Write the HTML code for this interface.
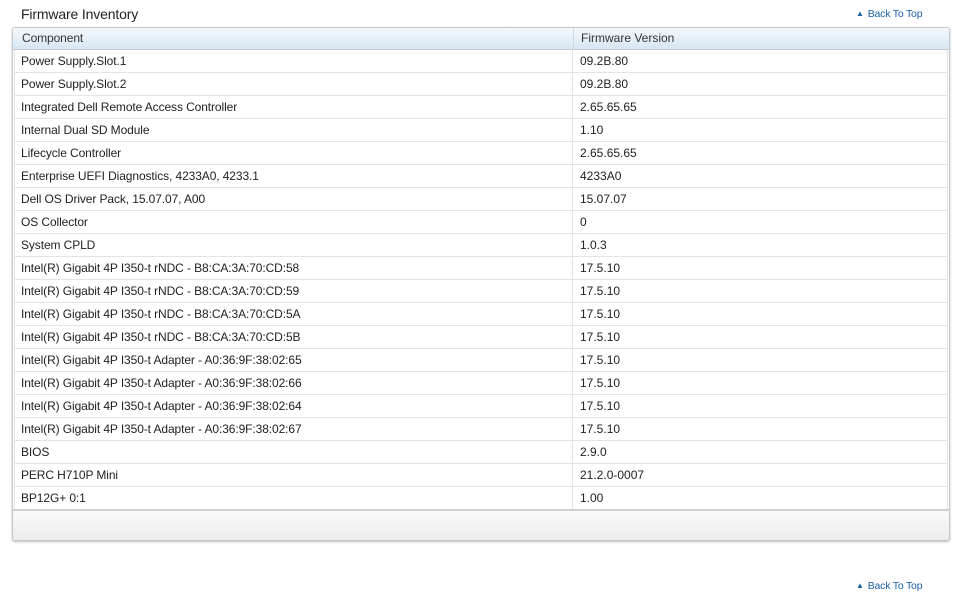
<!DOCTYPE html>
<html><head><style>
body{margin:0;background:#fff;font-family:"Liberation Sans",Arial,sans-serif;width:960px;height:608px;position:relative;overflow:hidden}
.title{position:absolute;left:21px;top:6px;font-size:14px;color:#222;letter-spacing:-0.15px}
.btt{position:absolute;left:856px;font-size:10.5px;color:#1a5fa6;letter-spacing:-0.2px}
.btt span{font-size:8px;margin-right:4px;position:relative;top:-1px}
.box{position:absolute;left:12px;top:27px;width:936px;height:512px;border:1px solid #c4c8cc;border-radius:3px;box-shadow:0 1px 2px rgba(0,0,0,.25);background:#fff;overflow:hidden}
.hdr{height:21px;background:linear-gradient(#f4f8fc,#d8e6f2);border-bottom:1px solid #c0ccd8;display:flex;font-size:12px;color:#333;line-height:21px}
.row{height:22px;border-bottom:1px solid #e4e4e4;display:flex;font-size:12px;color:#222;line-height:22px;margin:0 1px;border-left:1px solid #e4e4e4;border-right:1px solid #e4e4e4}
.c1{width:551px;padding-left:6px;border-right:1px solid #e4e4e4;letter-spacing:-0.1px}
.c2{padding-left:7px}
.hdr .c1{width:551px;padding-left:9px;border-right:1px solid #d0d8e0}
.foot{position:absolute;left:0;right:0;bottom:0;height:29px;border-top:2px solid #d0d0d0;background:linear-gradient(#fafafa,#ececec)}
</style></head><body>
<div class="title">Firmware Inventory</div>
<div class="btt" style="top:8px"><span>▲</span>Back To Top</div>
<div class="box">
<div class="hdr"><div class="c1">Component</div><div class="c2">Firmware Version</div></div>
<div class="row"><div class="c1">Power Supply.Slot.1</div><div class="c2">09.2B.80</div></div>
<div class="row"><div class="c1">Power Supply.Slot.2</div><div class="c2">09.2B.80</div></div>
<div class="row"><div class="c1">Integrated Dell Remote Access Controller</div><div class="c2">2.65.65.65</div></div>
<div class="row"><div class="c1">Internal Dual SD Module</div><div class="c2">1.10</div></div>
<div class="row"><div class="c1">Lifecycle Controller</div><div class="c2">2.65.65.65</div></div>
<div class="row"><div class="c1">Enterprise UEFI Diagnostics, 4233A0, 4233.1</div><div class="c2">4233A0</div></div>
<div class="row"><div class="c1">Dell OS Driver Pack, 15.07.07, A00</div><div class="c2">15.07.07</div></div>
<div class="row"><div class="c1">OS Collector</div><div class="c2">0</div></div>
<div class="row"><div class="c1">System CPLD</div><div class="c2">1.0.3</div></div>
<div class="row"><div class="c1">Intel(R) Gigabit 4P I350-t rNDC - B8:CA:3A:70:CD:58</div><div class="c2">17.5.10</div></div>
<div class="row"><div class="c1">Intel(R) Gigabit 4P I350-t rNDC - B8:CA:3A:70:CD:59</div><div class="c2">17.5.10</div></div>
<div class="row"><div class="c1">Intel(R) Gigabit 4P I350-t rNDC - B8:CA:3A:70:CD:5A</div><div class="c2">17.5.10</div></div>
<div class="row"><div class="c1">Intel(R) Gigabit 4P I350-t rNDC - B8:CA:3A:70:CD:5B</div><div class="c2">17.5.10</div></div>
<div class="row"><div class="c1">Intel(R) Gigabit 4P I350-t Adapter - A0:36:9F:38:02:65</div><div class="c2">17.5.10</div></div>
<div class="row"><div class="c1">Intel(R) Gigabit 4P I350-t Adapter - A0:36:9F:38:02:66</div><div class="c2">17.5.10</div></div>
<div class="row"><div class="c1">Intel(R) Gigabit 4P I350-t Adapter - A0:36:9F:38:02:64</div><div class="c2">17.5.10</div></div>
<div class="row"><div class="c1">Intel(R) Gigabit 4P I350-t Adapter - A0:36:9F:38:02:67</div><div class="c2">17.5.10</div></div>
<div class="row"><div class="c1">BIOS</div><div class="c2">2.9.0</div></div>
<div class="row"><div class="c1">PERC H710P Mini</div><div class="c2">21.2.0-0007</div></div>
<div class="row"><div class="c1">BP12G+ 0:1</div><div class="c2">1.00</div></div>
<div class="foot"></div>
</div>
<div class="btt" style="top:580px"><span>▲</span>Back To Top</div>
</body></html>
